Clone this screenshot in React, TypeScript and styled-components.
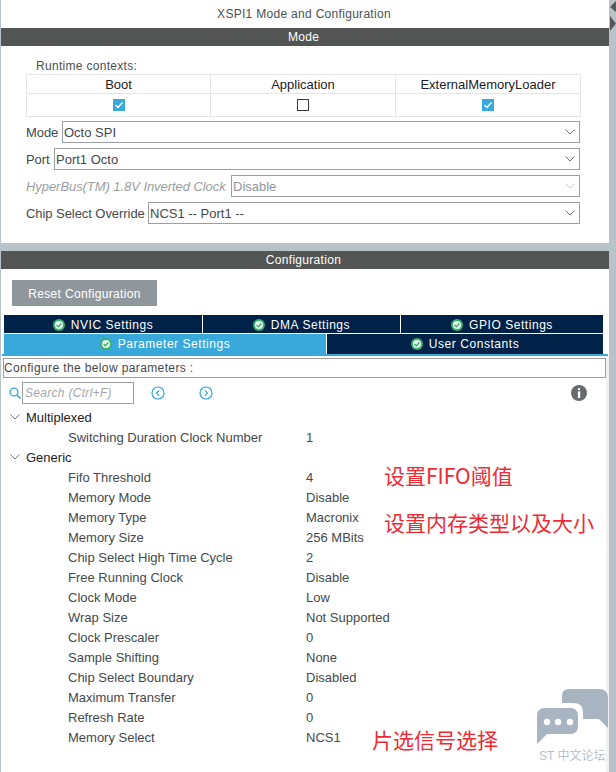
import React from "react";
import styled, { createGlobalStyle } from "styled-components";

const Global = createGlobalStyle`
  html, body { margin: 0; padding: 0; background: #b7c3c9; }
  body { width: 616px; height: 772px; overflow: hidden; font-family: "Liberation Sans", Arial, sans-serif; }
`;

const Page = styled.div`
  position: relative;
  width: 616px;
  height: 772px;
  padding-left: 1px;
  box-sizing: border-box;
  overflow: hidden;
`;
const Panel = styled.section<{ $h: number }>`
  width: 608px;
  height: ${(p) => p.$h}px;
  background: #fff;
`;
const Title = styled.div`
  height: 28px;
  line-height: 29px;
  padding-right: 2px;
  text-align: center;
  font-size: 12px;
  letter-spacing: 0.3px;
  color: #4a4f52;
`;
const SectionBar = styled.div`
  height: 18px;
  line-height: 19px;
  padding-right: 3px;
  text-align: center;
  background: #535554;
  color: #fff;
  font-size: 12px;
  letter-spacing: 0.3px;
`;
const ModeBody = styled.div`
  padding: 11px 29px 0 25px;
`;
const ContextLabel = styled.div`
  height: 17px;
  line-height: 18px;
  padding-left: 10px;
  font-size: 12px;
  letter-spacing: 0.3px;
  color: #4a4f52;
`;
const ContextTable = styled.div`
  display: grid;
  grid-template-columns: 184px 185px 185px;
  grid-template-rows: 19px 23px;
  border: 1px solid #e4e6e6;
  border-width: 1px 0 0 1px;
  width: 554px;
  box-sizing: border-box;
  margin-bottom: 4px;
`;
const ContextCell = styled.div`
  display: flex;
  align-items: center;
  justify-content: center;
  border: 1px solid #e4e6e6;
  border-width: 0 1px 1px 0;
  font-size: 13px;
  color: #1d2126;
`;
const CheckBox = styled.span<{ $on?: boolean }>`
  display: flex;
  align-items: center;
  justify-content: center;
  width: 12px;
  height: 12px;
  box-sizing: border-box;
  background: ${(p) => (p.$on ? "#39a9dc" : "#fff")};
  border: ${(p) => (p.$on ? "none" : "1px solid #3a3a3a")};
`;
const FieldRow = styled.div<{ $labelW: number }>`
  display: grid;
  grid-template-columns: ${(p) => p.$labelW}px 1fr;
  align-items: center;
  height: 22px;
  margin-bottom: 5px;
  width: 554px;
`;
const FieldLabel = styled.span<{ $off?: boolean }>`
  font-size: 13px;
  letter-spacing: -0.06px;
  white-space: nowrap;
  color: ${(p) => (p.$off ? "#9a9ea0" : "#44494c")};
  font-style: ${(p) => (p.$off ? "italic" : "normal")};
`;
const SelectBox = styled.div<{ $off?: boolean }>`
  height: 22px;
  box-sizing: border-box;
  border: 1px solid #9a9fa2;
  display: flex;
  align-items: center;
  justify-content: space-between;
  padding: 0 4px 0 1px;
  font-size: 13px;
  color: ${(p) => (p.$off ? "#8f9497" : "#44494c")};
`;
const ConfigHeadGap = styled.div`
  height: 8px;
`;
const ResetButton = styled.button`
  display: block;
  margin: 11px 0 9px 11px;
  width: 145px;
  height: 26px;
  border: none;
  background: #90979c;
  color: #fff;
  font-family: inherit;
  font-size: 12px;
  letter-spacing: 0.35px;
  padding: 1px 0 0;
`;
const TabRow = styled.div<{ $cols: string; $h: number }>`
  display: grid;
  grid-template-columns: ${(p) => p.$cols};
  column-gap: 1px;
  margin: 0 0 1px 3px;
  width: 599px;
  height: ${(p) => p.$h}px;
`;
const Tab = styled.div<{ $active?: boolean; $nudge?: boolean }>`
  display: flex;
  align-items: center;
  justify-content: center;
  gap: 6px;
  padding-top: ${(p) => (p.$nudge ? 1 : 0)}px;
  background: ${(p) => (p.$active ? "#39a9dc" : "#002249")};
  color: #fff;
  font-size: 12px;
  letter-spacing: 0.55px;
`;
const TabLine = styled.div`
  height: 2px;
  margin: -1px 0 0 1px;
  width: 606px;
  background: #39a9dc;
`;
const Lower = styled.div`
  border-right: 3px solid #eff1f2;
  height: 420px;
`;
const ParamHint = styled.div`
  margin-left: 2px;
  position: relative;
  top: 2px;
  width: 603px;
  height: 20px;
  box-sizing: border-box;
  border: 1px solid #9a9fa2;
  line-height: 18px;
  font-size: 12px;
  letter-spacing: 0.38px;
  color: #44494c;
`;
const SearchRow = styled.div`
  display: flex;
  align-items: center;
  height: 22px;
  margin-top: 6px;
  padding: 0 19px 0 8px;
`;
const SearchBox = styled.div`
  width: 112px;
  height: 22px;
  box-sizing: border-box;
  border: 1px solid #9a9fa2;
  margin-left: 1px;
  line-height: 21px;
  padding-left: 2px;
  font-size: 12px;
  font-style: italic;
  letter-spacing: 0.3px;
  color: #a3a7a9;
`;
const NavGroup = styled.div`
  display: flex;
  gap: 34px;
  margin-left: 17px;
`;
const InfoSlot = styled.div`
  margin-left: auto;
  display: flex;
`;
const Tree = styled.div`
  margin-top: 3px;
`;
const GroupRow = styled.div`
  display: flex;
  align-items: center;
  height: 20px;
  padding-left: 9px;
  gap: 6px;
  font-size: 13px;
  color: #1d2126;
`;
const ParamRow = styled.div`
  display: grid;
  grid-template-columns: 238px 1fr;
  height: 20px;
  line-height: 21px;
  padding-left: 67px;
  font-size: 13px;
  color: #44494c;
`;
const Note = styled.div<{ $x: number; $y: number }>`
  position: absolute;
  left: ${(p) => p.$x}px;
  top: ${(p) => p.$y}px;
  font-family: "Noto Sans CJK SC", "Liberation Sans", sans-serif;
  font-size: 21px;
  line-height: 26px;
  color: #ee2a35;
  white-space: nowrap;
`;
const Watermark = styled.div`
  position: absolute;
  left: 537px;
  top: 688px;
  width: 72px;
  height: 80px;
`;
const WatermarkText = styled.div`
  position: absolute;
  left: 2px;
  top: 60px;
  font-family: "Liberation Sans", "Noto Sans CJK SC", sans-serif;
  font-size: 12px;
  line-height: 16px;
  color: #b6bfcb;
  white-space: nowrap;
`;
const WatermarkIcon = styled.svg`
  display: block;
`;
const CollapseHandle = styled.svg`
  position: absolute;
  left: 610px;
  top: 0;
`;

const Chevron = ({ off }: { off?: boolean }) => (
  <svg width="10" height="6" viewBox="0 0 10 6" fill="none">
    <path d="M0.5 0.5 L5 5 L9.5 0.5" stroke={off ? "#cfd2d4" : "#6b7073"} strokeWidth="1" />
  </svg>
);
const Tick = () => (
  <svg width="10" height="8" viewBox="0 0 10 8" fill="none">
    <path d="M1.5 4 L4 6.5 L8.5 1.5" stroke="#fff" strokeWidth="1.3" />
  </svg>
);
const TabCheck = () => (
  <svg width="12" height="12" viewBox="0 0 12 12">
    <circle cx="6" cy="6" r="6" fill="#37b26c" />
    <circle cx="6" cy="6" r="4" fill="#e9f6ef" />
    <path d="M3.6 5.9 L5.4 7.7 L8.4 4.6" stroke="#37b26c" strokeWidth="1.4" fill="none" />
  </svg>
);
const Lens = () => (
  <svg width="12" height="12" viewBox="0 0 12 12" fill="none">
    <circle cx="5" cy="5" r="3.9" stroke="#39a9dc" strokeWidth="1.4" />
    <path d="M8 8 L11.5 11.5" stroke="#39a9dc" strokeWidth="1.6" />
  </svg>
);
const NavCircle = ({ dir }: { dir: "l" | "r" }) => (
  <svg width="14" height="14" viewBox="0 0 14 14" fill="none">
    <circle cx="7" cy="7" r="6" stroke="#39a9dc" strokeWidth="1.2" />
    <path d={dir === "l" ? "M8.2 4.4 L5.5 7 L8.2 9.6" : "M5.8 4.4 L8.5 7 L5.8 9.6"} stroke="#39a9dc" strokeWidth="1.2" />
  </svg>
);
const Info = () => (
  <svg width="16" height="16" viewBox="0 0 16 16">
    <circle cx="8" cy="8" r="8" fill="#666a6c" />
    <rect x="6.9" y="3" width="2.3" height="2.3" rx="1" fill="#fff" />
    <rect x="6.9" y="6.4" width="2.3" height="6.6" fill="#fff" />
  </svg>
);

const contexts: [string, boolean][] = [
  ["Boot", true],
  ["Application", false],
  ["ExternalMemoryLoader", true],
];
const fields = [
  { label: "Mode", value: "Octo SPI", w: 36 },
  { label: "Port", value: "Port1 Octo", w: 28 },
  { label: "HyperBus(TM) 1.8V Inverted Clock", value: "Disable", off: true, w: 205 },
  { label: "Chip Select Override", value: "NCS1 -- Port1 --", w: 122 },
];
const generic: [string, string][] = [
  ["Fifo Threshold", "4"],
  ["Memory Mode", "Disable"],
  ["Memory Type", "Macronix"],
  ["Memory Size", "256 MBits"],
  ["Chip Select High Time Cycle", "2"],
  ["Free Running Clock", "Disable"],
  ["Clock Mode", "Low"],
  ["Wrap Size", "Not Supported"],
  ["Clock Prescaler", "0"],
  ["Sample Shifting", "None"],
  ["Chip Select Boundary", "Disabled"],
  ["Maximum Transfer", "0"],
  ["Refresh Rate", "0"],
  ["Memory Select", "NCS1"],
];

export default function App() {
  return (
    <Page>
      <Global />
      <Panel $h={243}>
        <Title>XSPI1 Mode and Configuration</Title>
        <SectionBar>Mode</SectionBar>
        <ModeBody>
          <ContextLabel>Runtime contexts:</ContextLabel>
          <ContextTable>
            {contexts.map(([name]) => (
              <ContextCell key={name}>{name}</ContextCell>
            ))}
            {contexts.map(([name, on]) => (
              <ContextCell key={name}>
                <CheckBox $on={on}>{on && <Tick />}</CheckBox>
              </ContextCell>
            ))}
          </ContextTable>
          {fields.map((f) => (
            <FieldRow key={f.label} $labelW={f.w}>
              <FieldLabel $off={f.off}>{f.label}</FieldLabel>
              <SelectBox $off={f.off}>
                {f.value}
                <Chevron off={f.off} />
              </SelectBox>
            </FieldRow>
          ))}
        </ModeBody>
      </Panel>
      <ConfigHeadGap />
      <Panel $h={521}>
        <SectionBar>Configuration</SectionBar>
        <ResetButton>Reset Configuration</ResetButton>
        <TabRow $cols="198px 197px 1fr" $h={18}>
          {["NVIC Settings", "DMA Settings", "GPIO Settings"].map((t) => (
            <Tab key={t} $nudge>
              <TabCheck />
              {t}
            </Tab>
          ))}
        </TabRow>
        <TabRow $cols="322px 1fr" $h={20}>
          <Tab $active>
            <TabCheck />
            Parameter Settings
          </Tab>
          <Tab>
            <TabCheck />
            User Constants
          </Tab>
        </TabRow>
        <TabLine />
        <Lower>
          <ParamHint>Configure the below parameters :</ParamHint>
          <SearchRow>
            <Lens />
            <SearchBox>Search (Ctrl+F)</SearchBox>
            <NavGroup>
              <NavCircle dir="l" />
              <NavCircle dir="r" />
            </NavGroup>
            <InfoSlot>
              <Info />
            </InfoSlot>
          </SearchRow>
          <Tree>
            <GroupRow>
              <Chevron />
              Multiplexed
            </GroupRow>
            <ParamRow>
              <span>Switching Duration Clock Number</span>
              <span>1</span>
            </ParamRow>
            <GroupRow>
              <Chevron />
              Generic
            </GroupRow>
            {generic.map(([k, v]) => (
              <ParamRow key={k}>
                <span>{k}</span>
                <span>{v}</span>
              </ParamRow>
            ))}
          </Tree>
        </Lower>
      </Panel>
      <Note $x={384} $y={462}>设置FIFO阈值</Note>
      <Note $x={384} $y={509}>设置内存类型以及大小</Note>
      <Note $x={372} $y={726}>片选信号选择</Note>
      <Watermark>
        <WatermarkIcon width="72" height="58" viewBox="0 0 72 58">
          <path d="M25 15 L25 8 Q25 1 32 1 L62 1 Q71 1 71 10 L71 40 L62 31 L46 31 L46 24 Q46 15 36 15 Z" fill="#a9b4c2" />
          <path d="M8 20 L33 20 Q41 20 41 28 L41 38 Q41 46 33 46 L10 46 L0 56 L0 28 Q0 20 8 20 Z" fill="#a9b4c2" />
          <circle cx="10" cy="34" r="3.2" fill="#fff" />
          <circle cx="21" cy="34" r="3.2" fill="#fff" />
          <circle cx="33" cy="34" r="3.2" fill="#fff" />
        </WatermarkIcon>
        <WatermarkText>ST 中文论坛</WatermarkText>
      </Watermark>
      <CollapseHandle width="6" height="32" viewBox="0 0 6 32">
        <path d="M0 7 L6 1 L6 12 Z" fill="#555857" />
        <path d="M0 16 L6 23.5 L0 31 Z" fill="#555857" />
      </CollapseHandle>
    </Page>
  );
}
